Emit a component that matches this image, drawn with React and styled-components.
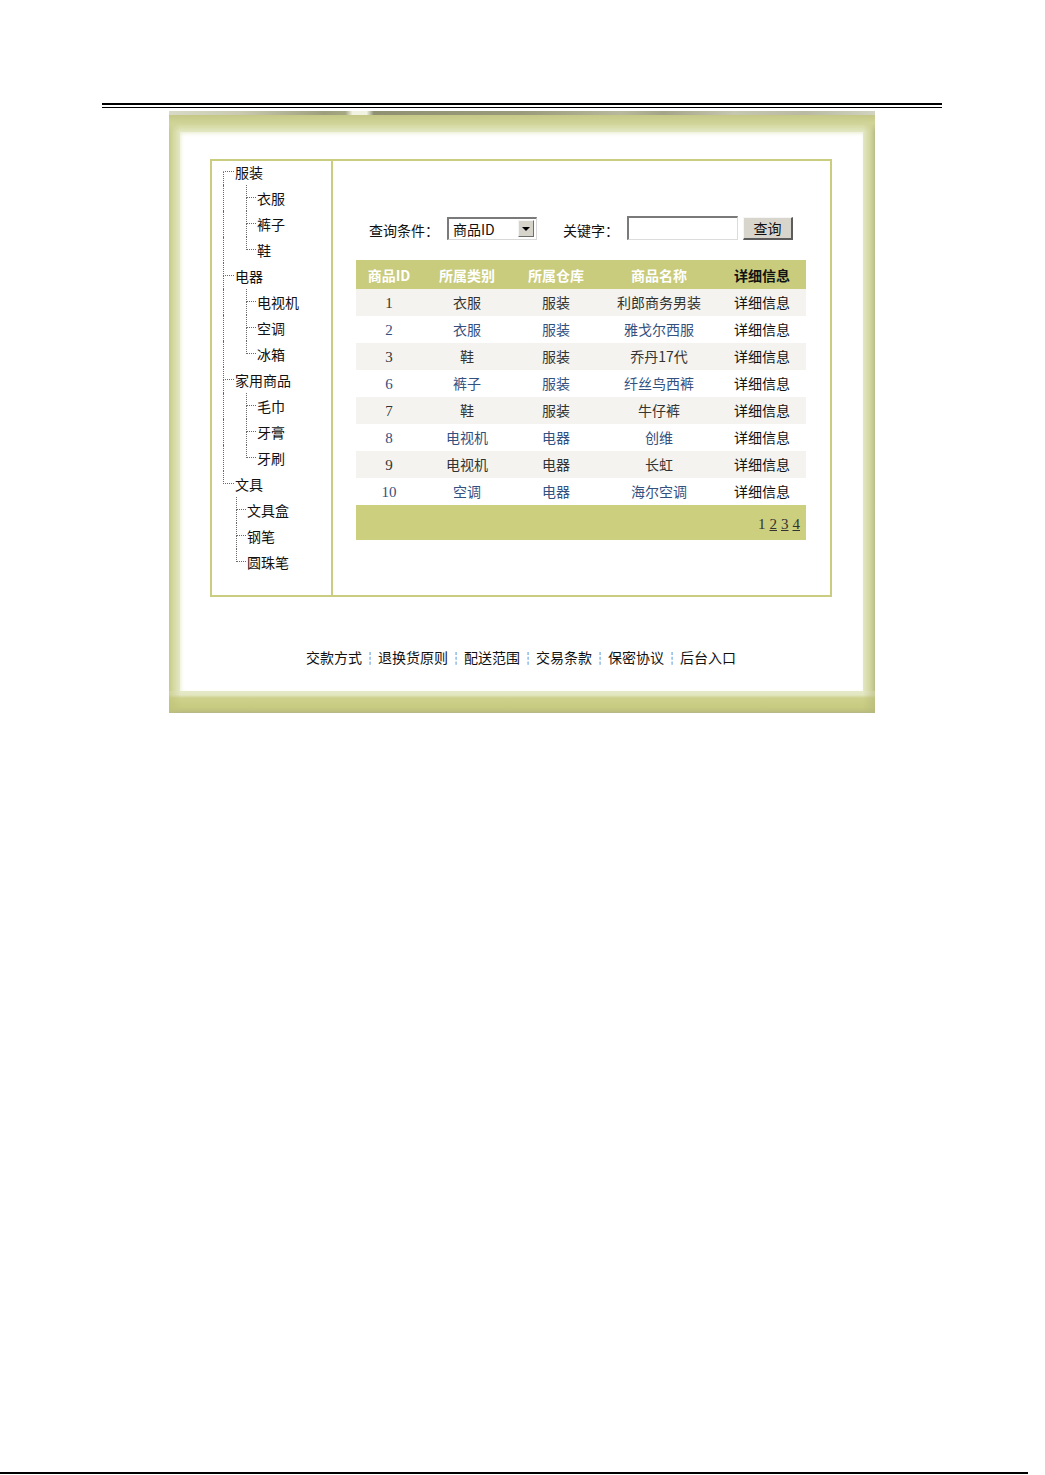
import React from 'react';
import styled, { createGlobalStyle } from 'styled-components';

const GlobalStyle = createGlobalStyle`
  html, body {
    margin: 0;
    padding: 0;
    background: #ffffff;
  }
  body {
    font-family: "Noto Sans CJK SC", "Liberation Sans", sans-serif;
    font-size: 14px;
    color: #111;
  }
`;

const Page = styled.div`
  min-height: 1475px;
  display: flex;
  flex-direction: column;
  padding-top: 103px;
  box-sizing: border-box;
`;

const HeaderRule = styled.div`
  margin-left: 102px;
  width: 840px;
  height: 2px;
  border-top: 2px solid #000;
  border-bottom: 1px solid #000;
`;

const Shot = styled.div`
  margin: 3px 0 0 169px;
  width: 706px;
  display: flex;
  flex-direction: column;
`;

const TopStrip = styled.div`
  height: 4px;
  background: linear-gradient(
    to right,
    #d9dac6 0,
    #c9cab0 10%,
    #9d9f7c 22%,
    #a6a883 25%,
    #f1f2e2 26%,
    #f1f2e2 28%,
    #8f9172 29%,
    #9a9b7a 50%,
    #b8b99c 64%,
    #a3a488 70%,
    #c6c7af 80%,
    #b9baa1 90%,
    #d2d3c0 100%
  );
`;

const Frame = styled.div`
  padding: 17px 12px 0 11px;
  background:
    linear-gradient(to bottom, #c4c786 0, #cfd396 8px, rgba(223, 227, 182, 0) 17px),
    linear-gradient(to right, #c6ca88 0, #d3d79f 4px, #e4e8c4 11px, #e4e8c4 calc(100% - 12px), #cfd39a calc(100% - 4px), #b9bc88 100%);
`;

const Panel = styled.div`
  background: #fff;
  box-shadow: inset 0 3px 4px -2px #e8ebcc, inset 3px 0 4px -2px #eef1d8;
  padding: 27px 31px 24px 30px;
  display: flex;
  flex-direction: column;
`;

const BottomBand = styled.div`
  height: 22px;
  background:
    linear-gradient(to right, rgba(190, 194, 120, 0.6) 0, rgba(255, 255, 255, 0) 12px, rgba(255, 255, 255, 0) calc(100% - 12px), rgba(180, 184, 120, 0.6) 100%),
    linear-gradient(to bottom, #e6e9c9 0, #e2e6c0 4px, #cdd18c 7px, #c7cb80 16px, #bfc27e 20px, #b4b78a 22px);
`;

const Box = styled.div`
  display: flex;
  height: 438px;
  border: 2px solid #cacd80;
  box-sizing: border-box;
`;

const SideCol = styled.div`
  width: 121px;
  border-right: 2px solid #cacd80;
  padding-left: 11px;
  box-sizing: border-box;
`;

const TreeList = styled.div`
  margin-top: -2px;
`;

const TreeRow = styled.div`
  display: flex;
  height: 26px;
  align-items: stretch;
`;

const Pass = styled.span`
  width: ${p => p.$w}px;
  box-sizing: border-box;
  border-left: 1px dotted ${p => (p.$line ? '#6a6a6a' : 'transparent')};
`;

const Conn = styled.span`
  width: ${p => p.$w}px;
  display: flex;
  flex-direction: column;
`;

const ConnTop = styled.span`
  height: 13px;
  box-sizing: border-box;
  border-left: 1px dotted ${p => (p.$first ? 'transparent' : '#6a6a6a')};
  border-bottom: 1px dotted #6a6a6a;
`;

const ConnBottom = styled.span`
  flex: 1;
  border-left: 1px dotted ${p => (p.$last ? 'transparent' : '#6a6a6a')};
`;

const NodeText = styled.span`
  margin-left: 1px;
  line-height: 26px;
  font-size: 14px;
  color: #111;
  white-space: nowrap;
`;

const MainCol = styled.div`
  flex: 1;
  padding: 55px 24px 0 23px;
`;

const SearchRow = styled.div`
  display: flex;
  align-items: center;
  height: 24px;
  margin-left: 13px;
`;

const Label = styled.span`
  font-size: 14px;
  color: #111;
  margin-left: ${p => p.$ml || 0}px;
  padding-top: 3px;
  white-space: nowrap;
`;

const SelectBox = styled.div`
  margin-left: 8px;
  width: 90px;
  height: 23px;
  box-sizing: border-box;
  border-top: 2px solid #7a7a7a;
  border-left: 2px solid #7a7a7a;
  border-right: 1px solid #d8d8d8;
  border-bottom: 1px solid #d8d8d8;
  display: flex;
  align-items: center;
  justify-content: space-between;
  padding: 0 2px 0 4px;
  background: #fff;
`;

const SelectValue = styled.span`
  font-size: 14px;
  color: #111;
`;

const ArrowButton = styled.span`
  width: 16px;
  height: 17px;
  box-sizing: border-box;
  background: #d6d3cb;
  border-top: 1px solid #f4f4f4;
  border-left: 1px solid #f4f4f4;
  border-right: 1px solid #6e6e6e;
  border-bottom: 1px solid #6e6e6e;
  display: flex;
  align-items: center;
  justify-content: center;

  &::after {
    content: '';
    border-left: 4px solid transparent;
    border-right: 4px solid transparent;
    border-top: 4px solid #000;
  }
`;

const TextInput = styled.div`
  margin-left: 8px;
  width: 111px;
  height: 24px;
  box-sizing: border-box;
  border-top: 2px solid #7a7a7a;
  border-left: 2px solid #7a7a7a;
  border-right: 1px solid #dcdcdc;
  border-bottom: 1px solid #dcdcdc;
  background: #fff;
`;

const Button = styled.div`
  margin-left: 5px;
  width: 50px;
  height: 23px;
  box-sizing: border-box;
  background: #d8d5cd;
  border-top: 1px solid #f6f6f6;
  border-left: 1px solid #f6f6f6;
  border-right: 2px solid #5c5c5c;
  border-bottom: 2px solid #5c5c5c;
  display: flex;
  align-items: center;
  justify-content: center;
  font-size: 14px;
  color: #111;
`;

const Table = styled.table`
  margin-top: 20px;
  width: 450px;
  border-collapse: collapse;
  table-layout: fixed;
`;

const HeadCell = styled.th`
  height: 29px;
  padding: 0;
  background: #c9cb7d;
  color: ${p => (p.$dark ? '#111' : '#ffffff')};
  font-weight: bold;
  font-size: 14px;
  text-align: center;
  white-space: nowrap;
`;

const BodyRow = styled.tr`
  height: 27px;
  background: ${p => (p.$odd ? '#f4f3ef' : '#ffffff')};
`;

const Cell = styled.td`
  padding: ${p => (p.$num ? '2px 0 0' : '0 0 2px')};
  text-align: center;
  font-size: ${p => (p.$num ? '15px' : '14px')};
  white-space: nowrap;
  color: ${p => (p.$dark ? '#111' : p.$blue ? '#33507f' : '#333')};
  font-family: ${p => (p.$num ? '"Liberation Serif", "Noto Sans CJK SC", serif' : 'inherit')};
`;

const PagerCell = styled.td`
  height: 35px;
  padding: 4px 6px 0 0;
  box-sizing: border-box;
  background: #cccf7e;
  text-align: right;
  font-family: "Liberation Serif", serif;
  font-size: 15px;
  color: #333;
`;

const PageLink = styled.span`
  margin-left: 4px;
  text-decoration: ${p => (p.$current ? 'none' : 'underline')};
`;

const Footer = styled.div`
  margin-top: 50px;
  line-height: 20px;
  text-align: center;
  font-size: 14px;
  color: #111;
  white-space: nowrap;
`;

const Sep = styled.span`
  margin: 0 1px;
  color: #333;
`;

const BottomRule = styled.div`
  margin-top: auto;
  margin-bottom: 1px;
  width: 1028px;
  height: 2px;
  background: #000;
`;

const tree = [
  { label: '服装', pass: 23, children: ['衣服', '裤子', '鞋'] },
  { label: '电器', pass: 23, children: ['电视机', '空调', '冰箱'] },
  { label: '家用商品', pass: 23, children: ['毛巾', '牙膏', '牙刷'] },
  { label: '文具', pass: 13, children: ['文具盒', '钢笔', '圆珠笔'] },
];

const rows = [
  ['1', '衣服', '服装', '利郎商务男装'],
  ['2', '衣服', '服装', '雅戈尔西服'],
  ['3', '鞋', '服装', '乔丹17代'],
  ['6', '裤子', '服装', '纤丝鸟西裤'],
  ['7', '鞋', '服装', '牛仔裤'],
  ['8', '电视机', '电器', '创维'],
  ['9', '电视机', '电器', '长虹'],
  ['10', '空调', '电器', '海尔空调'],
];

const footerLinks = ['交款方式', '退换货原则', '配送范围', '交易条款', '保密协议', '后台入口'];

const Tree = () => (
  <SideCol>
    <TreeList>
      {tree.map((group, gi) => {
        const lastGroup = gi === tree.length - 1;
        return (
          <React.Fragment key={group.label}>
            <TreeRow>
              <Conn $w={11}>
                <ConnTop $first={gi === 0} />
                <ConnBottom $last={lastGroup} />
              </Conn>
              <NodeText>{group.label}</NodeText>
            </TreeRow>
            {group.children.map((child, ci) => (
              <TreeRow key={child}>
                <Pass $w={group.pass} $line={!lastGroup} />
                <Conn $w={10}>
                  <ConnTop />
                  <ConnBottom $last={ci === group.children.length - 1} />
                </Conn>
                <NodeText>{child}</NodeText>
              </TreeRow>
            ))}
          </React.Fragment>
        );
      })}
    </TreeList>
  </SideCol>
);

const App = () => {
  return (
    <Page>
      <GlobalStyle />
      <HeaderRule />
      <Shot>
        <TopStrip />
        <Frame>
          <Panel>
            <Box>
              <Tree />
              <MainCol>
                <SearchRow>
                  <Label>查询条件：</Label>
                  <SelectBox>
                    <SelectValue>商品ID</SelectValue>
                    <ArrowButton />
                  </SelectBox>
                  <Label $ml={26}>关键字：</Label>
                  <TextInput />
                  <Button>查询</Button>
                </SearchRow>
                <Table>
                  <colgroup>
                    <col style={{ width: 66 }} />
                    <col style={{ width: 90 }} />
                    <col style={{ width: 88 }} />
                    <col style={{ width: 118 }} />
                    <col style={{ width: 88 }} />
                  </colgroup>
                  <thead>
                    <tr>
                      <HeadCell>商品ID</HeadCell>
                      <HeadCell>所属类别</HeadCell>
                      <HeadCell>所属仓库</HeadCell>
                      <HeadCell>商品名称</HeadCell>
                      <HeadCell $dark>详细信息</HeadCell>
                    </tr>
                  </thead>
                  <tbody>
                    {rows.map((r, i) => {
                      const odd = i % 2 === 0;
                      return (
                        <BodyRow key={r[0]} $odd={odd}>
                          <Cell $num $blue={!odd}>{r[0]}</Cell>
                          <Cell $blue={!odd}>{r[1]}</Cell>
                          <Cell $blue={!odd}>{r[2]}</Cell>
                          <Cell $blue={!odd}>{r[3]}</Cell>
                          <Cell $dark>详细信息</Cell>
                        </BodyRow>
                      );
                    })}
                    <tr>
                      <PagerCell colSpan={5}>
                        <PageLink $current>1</PageLink>
                        <PageLink>2</PageLink>
                        <PageLink>3</PageLink>
                        <PageLink>4</PageLink>
                      </PagerCell>
                    </tr>
                  </tbody>
                </Table>
              </MainCol>
            </Box>
            <Footer>
              {footerLinks.map((f, i) => (
                <React.Fragment key={f}>
                  {i > 0 && <Sep>┆</Sep>}
                  {f}
                </React.Fragment>
              ))}
            </Footer>
          </Panel>
        </Frame>
        <BottomBand />
      </Shot>
      <BottomRule />
    </Page>
  );
};

export default App;
